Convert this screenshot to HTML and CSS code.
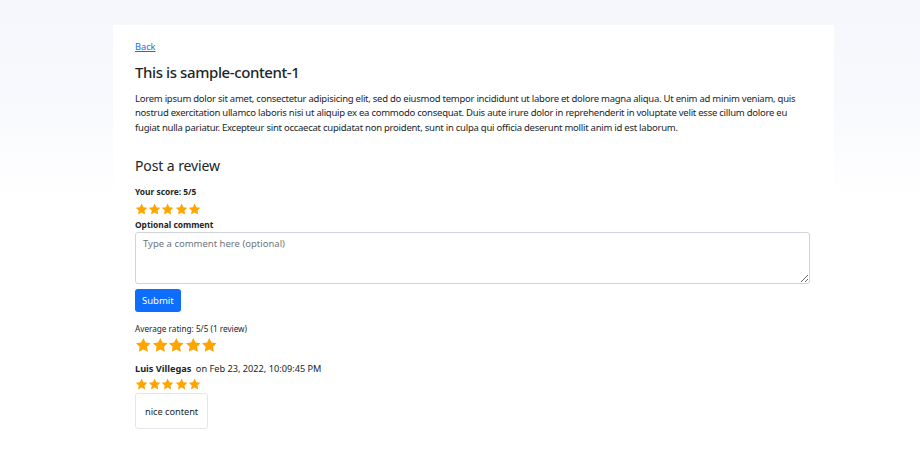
FILE: index.html
```html
<!DOCTYPE html>
<html>
<head>
<meta charset="utf-8">
<link rel="stylesheet" href="styles.css">
</head>
<body>
<svg width="0" height="0" class="defs">
  <defs>
    <symbol id="star" viewBox="0 0 24 24"><path d="M12 1l3.25 6.7 7.35 1.05-5.3 5.15 1.27 7.3L12 17.75l-6.57 3.45 1.27-7.3-5.3-5.15 7.35-1.05z"/></symbol>
  </defs>
</svg>
<div class="page">
  <main class="card">
    <a class="back" href="#">Back</a>
    <h1 class="title">This is sample-content-1</h1>
    <p class="desc">Lorem ipsum dolor sit amet, consectetur adipisicing elit, sed do eiusmod tempor incididunt ut labore et dolore magna aliqua. Ut enim ad minim veniam, quis nostrud exercitation ullamco laboris nisi ut aliquip ex ea commodo consequat. Duis aute irure dolor in reprehenderit in voluptate velit esse cillum dolore eu fugiat nulla pariatur. Excepteur sint occaecat cupidatat non proident, sunt in culpa qui officia deserunt mollit anim id est laborum.</p>

    <h2 class="section">Post a review</h2>
    <div class="label">Your score: 5/5</div>
    <div class="stars sm">
      <svg><use href="#star"/></svg><svg><use href="#star"/></svg><svg><use href="#star"/></svg><svg><use href="#star"/></svg><svg><use href="#star"/></svg>
    </div>
    <div class="label">Optional comment</div>
    <textarea class="comment" placeholder="Type a comment here (optional)"></textarea>
    <button class="submit">Submit</button>

    <div class="avg">Average rating: 5/5 (1 review)</div>
    <div class="stars lg">
      <svg><use href="#star"/></svg><svg><use href="#star"/></svg><svg><use href="#star"/></svg><svg><use href="#star"/></svg><svg><use href="#star"/></svg>
    </div>

    <div class="review">
      <div class="meta"><b class="author">Luis Villegas</b> <span class="date">on Feb 23, 2022, 10:09:45 PM</span></div>
      <div class="stars sm rev">
        <svg><use href="#star"/></svg><svg><use href="#star"/></svg><svg><use href="#star"/></svg><svg><use href="#star"/></svg><svg><use href="#star"/></svg>
      </div>
      <div class="review-body">nice content</div>
    </div>
  </main>
</div>
</body>
</html>
```
FILE: styles.css
```css
html, body {
  margin: 0;
  padding: 0;
}
body {
  background: linear-gradient(#f6f7fc 0, #f8f9fd 100px, #ffffff 200px);
  font-family: "Noto Sans", "Open Sans", sans-serif;
  color: #212529;
  font-size: 9.5px;
  line-height: 14.5px;
  min-height: 462px;
}
.defs {
  position: absolute;
}
.page {
  padding-top: 25px;
}
.card {
  display: block;
  width: 675px;
  margin-left: 113px;
  padding: 15px 24px 30px 22px;
  background: #fff;
  min-height: 392px;
}
.back {
  display: inline-block;
  color: #0d6efd;
  text-decoration: underline;
  font-size: 9.2px;
}
.title {
  margin: 7px 0 0;
  font-size: 15px;
  line-height: 20px;
  font-weight: 500;
  letter-spacing: -0.4px;
}
.desc {
  margin: 10px 0 0;
  letter-spacing: -0.25px;
}
.section {
  margin: 22px 0 0;
  font-size: 14px;
  line-height: 17px;
  font-weight: 400;
  letter-spacing: -0.1px;
}
.label {
  font-weight: 700;
  font-size: 8.4px;
  line-height: 12px;
}
.section + .label {
  margin-top: 12px;
}
.stars {
  display: flex;
  fill: #ffa500;
}
.stars.sm {
  margin: 5px 0 3px;
}
.stars.sm svg {
  width: 13.2px;
  height: 13px;
}
.stars.lg {
  margin: 2px 0 0;
}
.stars.lg svg {
  width: 16.6px;
  height: 17px;
}
.stars.rev {
  margin: 2px 0 0;
}
.comment {
  display: block;
  box-sizing: border-box;
  width: 675px;
  height: 52px;
  margin-top: 1px;
  padding: 4px 7px;
  border: 1px solid #ced4da;
  border-radius: 3px;
  font-family: inherit;
  font-size: 9.5px;
  line-height: 14.5px;
  color: #212529;
  resize: vertical;
}
.comment::placeholder {
  color: #6c757d;
}
.submit {
  display: block;
  margin-top: 5px;
  height: 23px;
  padding: 0 7px;
  border: 0;
  border-radius: 3px;
  background: #0d6efd;
  color: #fff;
  font-family: inherit;
  font-size: 9.5px;
}
.avg {
  margin-top: 11px;
  font-size: 8.2px;
  line-height: 12px;
}
.review {
  margin-top: 8px;
}
.meta {
  font-size: 9.2px;
  line-height: 14px;
}
.author {
  font-weight: 700;
}
.date {
  margin-left: 2px;
}
.review-body {
  display: inline-block;
  margin-top: 2px;
  padding: 11px 9px 10px;
  border: 1px solid #e3e6ea;
  border-radius: 3px;
  font-size: 9.2px;
  line-height: 13px;
}
```
